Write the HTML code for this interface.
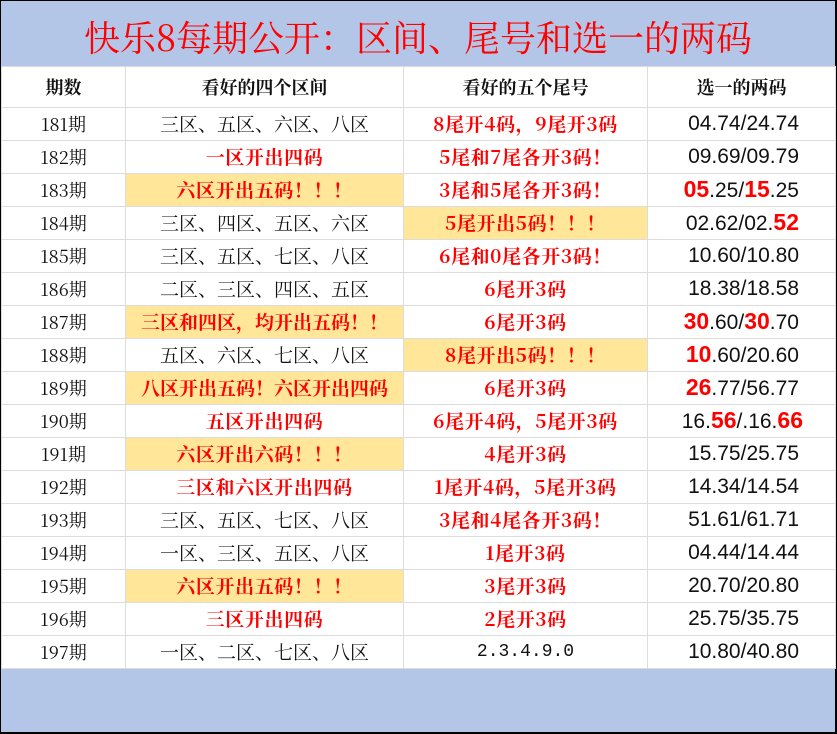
<!DOCTYPE html>
<html><head><meta charset="utf-8"><style>
*{margin:0;padding:0;box-sizing:border-box}
body{width:837px;height:734px;background:#000;overflow:hidden;position:relative}
#wrap{position:absolute;left:1px;top:1px;width:834px;height:731px;background:#b4c6e7}
.title{height:65px;text-align:center;font:36px/72px "Noto Serif CJK SC",serif;color:#f00}
table{border-collapse:collapse;position:absolute;left:0;top:65px;width:834px;background:#fff;table-layout:fixed}
td{border:1px solid #dcdcdc;height:33px;text-align:center;vertical-align:middle;font:18px/20px "Noto Serif CJK SC",serif;color:#111;white-space:nowrap;overflow:hidden}
td.b{font-size:19px}
tr.h td{height:41px;font-weight:bold;font-size:18px}
td.r{color:#f00;font-weight:bold;font-size:19px;letter-spacing:.6px}
td.y{background:#ffe699}
td.n{font:21px/24px "Liberation Sans",sans-serif;text-align:right;padding-right:36px}
td.n b{color:#f00;font-size:23px}
tr.h td.n{text-align:center;padding-right:0;font:bold 18px "Noto Serif CJK SC",serif}
td.m{font-family:"Liberation Mono",monospace;font-size:18px}
</style></head><body><div id="wrap">
<div class="title">快乐8每期公开：区间、尾号和选一的两码</div>
<table>
<colgroup><col style="width:124px"><col style="width:278px"><col style="width:244px"><col style="width:188px"></colgroup>
<tr class="h"><td>期数</td><td>看好的四个区间</td><td>看好的五个尾号</td><td class="n">选一的两码</td></tr>
<tr><td>181期</td><td class="b">三区、五区、六区、八区</td><td class="r">8尾开4码，9尾开3码</td><td class="n">04.74/24.74</td></tr>
<tr><td>182期</td><td class="r">一区开出四码</td><td class="r">5尾和7尾各开3码！</td><td class="n">09.69/09.79</td></tr>
<tr><td>183期</td><td class="r y">六区开出五码！！！</td><td class="r">3尾和5尾各开3码！</td><td class="n"><b>05</b>.25/<b>15</b>.25</td></tr>
<tr><td>184期</td><td class="b">三区、四区、五区、六区</td><td class="r y">5尾开出5码！！！</td><td class="n">02.62/02.<b>52</b></td></tr>
<tr><td>185期</td><td class="b">三区、五区、七区、八区</td><td class="r">6尾和0尾各开3码！</td><td class="n">10.60/10.80</td></tr>
<tr><td>186期</td><td class="b">二区、三区、四区、五区</td><td class="r">6尾开3码</td><td class="n">18.38/18.58</td></tr>
<tr><td>187期</td><td class="r y" style="letter-spacing:0">三区和四区，均开出五码！！</td><td class="r">6尾开3码</td><td class="n"><b>30</b>.60/<b>30</b>.70</td></tr>
<tr><td>188期</td><td class="b">五区、六区、七区、八区</td><td class="r y">8尾开出5码！！！</td><td class="n"><b>10</b>.60/20.60</td></tr>
<tr><td>189期</td><td class="r y" style="letter-spacing:0">八区开出五码！六区开出四码</td><td class="r">6尾开3码</td><td class="n"><b>26</b>.77/56.77</td></tr>
<tr><td>190期</td><td class="r">五区开出四码</td><td class="r">6尾开4码，5尾开3码</td><td class="n" style="padding-right:32px">16.<b>56</b>/.16.<b>66</b></td></tr>
<tr><td>191期</td><td class="r y">六区开出六码！！！</td><td class="r">4尾开3码</td><td class="n">15.75/25.75</td></tr>
<tr><td>192期</td><td class="r">三区和六区开出四码</td><td class="r">1尾开4码，5尾开3码</td><td class="n">14.34/14.54</td></tr>
<tr><td>193期</td><td class="b">三区、五区、七区、八区</td><td class="r">3尾和4尾各开3码！</td><td class="n">51.61/61.71</td></tr>
<tr><td>194期</td><td class="b">一区、三区、五区、八区</td><td class="r">1尾开3码</td><td class="n">04.44/14.44</td></tr>
<tr><td>195期</td><td class="r y">六区开出五码！！！</td><td class="r">3尾开3码</td><td class="n">20.70/20.80</td></tr>
<tr><td>196期</td><td class="r">三区开出四码</td><td class="r">2尾开3码</td><td class="n">25.75/35.75</td></tr>
<tr><td>197期</td><td class="b">一区、二区、七区、八区</td><td class="m">2.3.4.9.0</td><td class="n">10.80/40.80</td></tr>
</table>
</div></body></html>
